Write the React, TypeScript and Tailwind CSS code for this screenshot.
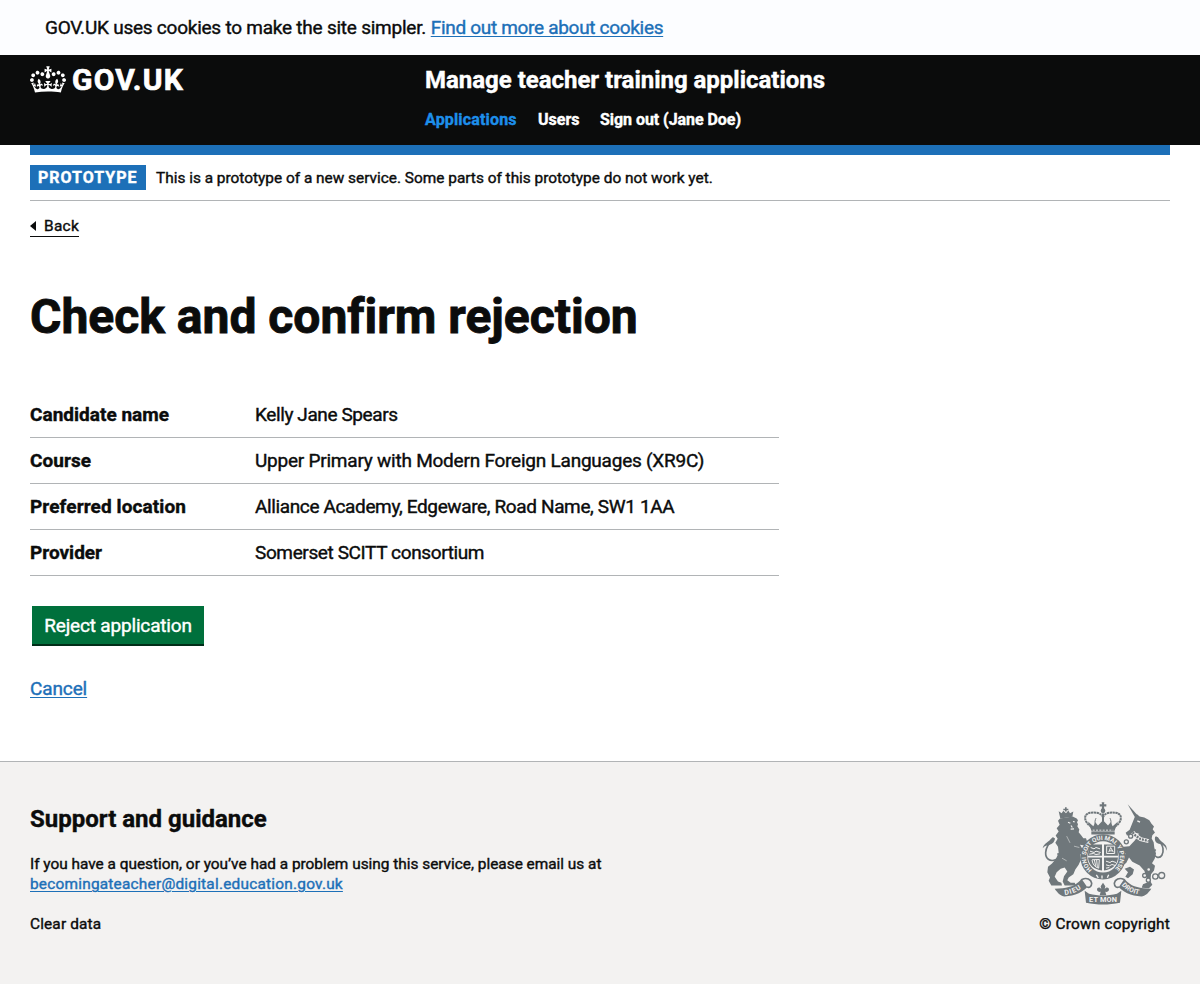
import React from "react";

const CROWN =
  "M25 30.2c3.5 1.5 7.7-.2 9.1-3.7 1.5-3.6-.2-7.8-3.9-9.2-3.6-1.4-7.6.3-9.1 3.9-1.4 3.5.3 7.5 3.9 9zM9 39.5c3.6 1.5 7.8-.2 9.2-3.7 1.5-3.6-.2-7.8-3.9-9.1-3.6-1.5-7.6.2-9.1 3.8-1.4 3.5.3 7.5 3.8 9zM4.4 57.2c3.5 1.5 7.7-.2 9.1-3.8 1.5-3.6-.2-7.7-3.9-9.1-3.5-1.5-7.6.3-9.1 3.8-1.4 3.5.3 7.6 3.9 9.1zm38.3-21.4c3.5 1.5 7.7-.2 9.1-3.8 1.5-3.6-.2-7.7-3.9-9.1-3.6-1.5-7.6.3-9.1 3.8-1.3 3.6.4 7.7 3.9 9.1zm64.4-5.6c-3.6 1.5-7.8-.2-9.1-3.7-1.5-3.6.2-7.8 3.8-9.2 3.6-1.4 7.7.3 9.2 3.9 1.3 3.5-.4 7.5-3.9 9zm15.9 9.3c-3.6 1.5-7.7-.2-9.1-3.7-1.5-3.6.2-7.8 3.7-9.1 3.6-1.5 7.7.2 9.2 3.8 1.5 3.5-.3 7.5-3.8 9zm4.7 17.7c-3.6 1.5-7.8-.2-9.2-3.8-1.5-3.6.2-7.7 3.9-9.1 3.6-1.5 7.7.3 9.2 3.8 1.3 3.5-.4 7.6-3.9 9.1zM89.3 35.8c-3.6 1.5-7.8-.2-9.2-3.8-1.4-3.6.2-7.7 3.9-9.1 3.6-1.5 7.7.3 9.2 3.8 1.4 3.6-.3 7.7-3.9 9.1zM69.7 17.7l8.9 4.7V9.3l-8.9 2.8c-.2-.3-.5-.6-.9-.9L72.4 0H59.6l3.5 11.2c-.3.3-.6.5-.9.9l-8.8-2.8v13.1l8.8-4.7c.3.3.6.7.9.9l-5 15.4v.1c-.2.8-.4 1.6-.4 2.4 0 4.1 3.1 7.5 7 8.1h.2c.3 0 .7.1 1 .1.4 0 .7 0 1-.1h.2c4-.6 7.1-4.1 7.1-8.1 0-.8-.1-1.7-.4-2.4V34l-5.1-15.4c.4-.2.7-.6 1-.9zM66 92.8c16.9 0 32.8 1.1 47.1 3.2 4-16.9 8.9-26.7 14-33.5l-9.6-3.4c1 4.9 1.1 7.2 0 10.2-1.5-1.4-3-4.3-4.2-8.7L108.6 76c2.8-2 5-3.2 7.5-3.3-4.4 9.4-10 11.9-13.6 11.2-4.3-.8-6.3-4.6-5.6-7.9 1-4.7 5.7-5.9 8-.5 4.3-8.7-3-11.4-7.6-8.8 7.1-7.2 7.9-13.5 2.1-21.1-8 6.1-8.1 12.3-4.5 20.8-4.7-5.4-12.1-2.5-9.5 6.2 3.4-5.2 7.9-2 7.2 3.1-.6 4.3-6.4 7.8-13.5 7.2-10.3-.9-10.9-8-11.2-13.8 2.5-.5 7.1 1.8 11 7.3L80.2 60c-4.1 4.4-8 5.3-12.3 5.4 1.4-4.4 8-11.6 8-11.6H55.5s6.4 7.2 7.9 11.6c-4.2-.1-8-1-12.3-5.4l1.4 16.4c3.9-5.5 8.5-7.7 10.9-7.3-.3 5.8-.9 12.8-11.1 13.8-7.2.6-12.9-2.9-13.5-7.2-.7-5 3.8-8.3 7.1-3.1 2.7-8.7-4.6-11.6-9.4-6.2 3.7-8.5 3.6-14.7-4.6-20.8-5.8 7.6-5 13.9 2.2 21.1-4.7-2.6-11.9.1-7.7 8.8 2.3-5.5 7.1-4.2 8.1.5.7 3.3-1.3 7.1-5.7 7.9-3.5.7-9-1.8-13.5-11.2 2.5.1 4.7 1.3 7.5 3.3l-4.7-15.4c-1.2 4.4-2.7 7.2-4.3 8.7-1.1-3-.9-5.3 0-10.2l-9.5 3.4c5 6.9 9.9 16.7 14 33.5 14.8-2.1 30.8-3.2 47.7-3.2z";

function Crest() {
  const ink = "#6f777b";
  const paper = "#f3f2f1";
  return (
    <svg viewBox="36 20 375 308" className="h-[103px] w-[125px]" aria-hidden="true">
      {/* crown over the shield */}
      <g fill={ink}>
        <path d="M215 20h8l-1 6h7v7h-7l1 8h-8l1-8h-7v-7h7z" />
        <circle cx="219" cy="46" r="7" />
        <path d="M174 78l16 14 6-12 8 10 15-16 15 16 8-10 6 12 16-14-11 29h-68z" />
        <path d="M184 108h70v9h-70z" />
      </g>
      <g fill="none" stroke={ink}>
        <path strokeWidth="6" strokeDasharray="7 1.5" d="M184 94c-22-14-26-38-4-42 18-3 36 1 39 14 3-13 21-17 39-14 22 4 18 28-4 42" />
        <path strokeWidth="6" d="M219 54v34" />
        <path strokeWidth="3" d="M198 68c-3 6-4 12-2 20M240 68c3 6 4 12 2 20" />
      </g>
      <path d="M188 104h62" stroke={paper} strokeWidth="2.5" strokeDasharray="6 4" />
      {/* small crown and lion */}
      <g fill={ink}>
        <path d="M105 35h5v5h5v4h-5v4h-5v-4h-5v-4h5zM86 47l9 6 5-7 8 7 7-8 5 8 10-5-3 16-36 5z" />
        <path d="M90 69 128 63 140 69 144 74 141 80 144 86 142 92 148 102 146 110 154 120 160 128 168 128 172 140 164 150 150 148 156 158 172 160 180 170 172 182 160 176 150 176 153 192 146 208 136 222 130 236 116 246 112 254 122 262 134 262 138 270 104 270 98 258 102 242 112 228 104 216 92 220 80 230 74 244 84 258 94 262 96 270 64 270 56 256 60 246 52 230 54 214 66 204 78 190 86 172 84 154 76 142 83 130 77 120 86 108 80 98 89 88 84 76Z" />
        <path d="M38 158c4-14 14-16 23-26l7-7 7 4c-2 13-11 19-22 20-7 1-11 4-15 9z" />
      </g>
      <path d="M72 128c-13 12-24 27-25 43-1 17 12 30 31 21 12-6 14-16 4-17" fill="none" stroke={ink} strokeWidth="5" />
      <path d="M114 80l7 3M129 78l5 1M123 90l4 6M122 101l10-1" stroke={paper} strokeWidth="3.5" />
      <path d="M110 122l10 20M132 152l16 4M96 188l14 8" stroke={paper} strokeWidth="1.5" />
      {/* unicorn */}
      <g fill={ink}>
        <path d="M293 26l33 37-9 6z" />
        <path d="M314 65l7-9 8 7 14 3 15 8 6 10 8 9-4 8 7 10-8 8-2 10 6 11 2 17 5 17-4 16-8 13 9 8-3 14-9 11-2 21 6 11-10 10-22-1 4-11 13-5-3-19-6-16-14-16-22-11-10-13-8 16-11 9-11-3-1-10 12-5 9-19-16-8-9-12-10 3-5-8 9-8 15 4 10 9 17-2 17-18 12-19-10-3-11 7-15 1-4-8 12-9z" />
        <path d="M410 166c-4-16-11-18-24-21-9-3-14-12-10-22l8 2c7 13 18 16 24 26 2 5 3 10 2 15z" />
        <path d="M300 214l12 8-4 14-14 12-8-4 8-14-10-10z" />
      </g>
      <path d="M378 124c6 10 19 19 21 35 2 15-5 30-18 26-11-4-13-15-4-23" fill="none" stroke={ink} strokeWidth="5" />
      <path d="M308 110l8 10 16 11 24 6" fill="none" stroke={paper} strokeWidth="12" />
      <path d="M308 110l8 10 16 11 24 6" fill="none" stroke={ink} strokeWidth="7" strokeDasharray="6 3" />
      <path d="M322 76l8 4" stroke={paper} strokeWidth="4" />
      <g fill={paper} stroke={ink} strokeWidth="4">
        <circle cx="302" cy="122" r="6" />
        <circle cx="289" cy="139" r="6" />
        <circle cx="356" cy="222" r="6" />
        <circle cx="344" cy="240" r="6" />
        <circle cx="355" cy="254" r="6" />
        <circle cx="376" cy="243" r="8" />
        <circle cx="395" cy="240" r="9" />
      </g>
      {/* garter and shield */}
      <circle cx="219" cy="184" r="68" fill={ink} />
      <circle cx="219" cy="184" r="47" fill={paper} />
      <path id="motto" d="M186 223A51 51 0 1 1 252 223" fill="none" />
      <text fill={paper} fontFamily="Roboto" fontWeight="700" fontSize="18" textLength="244" lengthAdjust="spacingAndGlyphs">
        <textPath href="#motto">HONI SOIT QUI MAL Y PENSE</textPath>
      </text>
      <g fill={ink}>
        <path d="M182 147h34v34h-42c0-13 2-24 8-34zM222 147h34c6 10 8 21 8 34h-42zM174 186h42v39c-24-3-40-16-42-39zM222 186h42c-2 23-18 36-42 39z" />
      </g>
      <g fill="none" stroke={paper} strokeWidth="3">
        <path d="M182 156l10 4 6-4 12 4M180 167l12 4 6-4 14 4M178 176l12-2 8 3 12-2" />
        <path d="M228 197l12 4 6-4 12 4M228 208l10 3 8-4 10 3M228 218l10-2" />
        <path d="M230 152h24v22h-24zM242 156l-6 14M242 156l8 14M238 166h10" />
        <path d="M186 194c2 12 8 21 20 24M193 193l4 18M200 193l2 22M186 193l22-1-2 26" />
      </g>
      <path d="M199 238l6 9M216 240v9M236 238l-4 9" stroke={paper} strokeWidth="4" />
      {/* fleur and scrolls */}
      <g fill={ink}>
        <path d="M219 262l7 10-2 9c4-8 13-6 13 1 0 6-6 8-11 7l3 10h-20l3-10c-5 1-11-1-11-7 0-7 9-9 13-1l-2-9z" />
        <path d="M74 280 98 278C124 276 144 266 154 250L178 268C162 290 134 302 104 303 92 302 84 294 74 280Z" />
        <path d="M364 280 340 278C314 276 294 266 284 250L260 268C276 290 304 302 334 303 346 302 354 294 364 280Z" />
        <path d="M164 286l13 9c28 7 56 7 84 0l13-9-4 36c-34 7-68 7-102 0z" />
      </g>
      <path d="M156 252c14-7 27 0 29 11 0 11-8 15-14 11M282 252c-14-7-27 0-29 11 0 11 8 15 14 11" fill={paper} stroke={ink} strokeWidth="5" />
      <g fill={paper} fontFamily="Roboto" fontWeight="700">
        <text x="177" y="320" fontSize="22" textLength="84">ET MON</text>
        <path id="dieu" d="M104 298C128 296 148 287 164 270" fill="none" />
        <path id="droit" d="M275 269C289 286 309 296 340 298" fill="none" />
        <text fontSize="21" textLength="54"><textPath href="#dieu">DIEU</textPath></text>
        <text fontSize="20" textLength="60"><textPath href="#droit">DROIT</textPath></text>
      </g>
    </svg>
  );
}

const rows = [
  { k: "Candidate name", kc: "tracking-[0.016px]", v: "Kelly Jane Spears", vc: "tracking-[-0.4px]" },
  { k: "Course", kc: "tracking-[0.04px]", v: "Upper Primary with Modern Foreign Languages (XR9C)", vc: "tracking-[-0.23px]" },
  { k: "Preferred location", kc: "tracking-[0.1px]", v: "Alliance Academy, Edgeware, Road Name, SW1 1AA", vc: "tracking-[-0.37px]" },
  { k: "Provider", kc: "", v: "Somerset SCITT consortium", vc: "tracking-[-0.38px]" },
];

export default function App() {
  return (
    <div className="flex min-h-[984px] flex-col bg-white font-['Roboto',sans-serif] text-[#0b0c0c] [font-variant-ligatures:none] [-webkit-text-stroke:0.4px_currentColor]">
      <div className="h-[55px] bg-[#fcfdff] px-[45px] pt-[15px] text-[19px] leading-[25px]">
        <span className="tracking-[-0.235px]">GOV.UK uses cookies to make the site simpler.</span>{" "}
        <a className="tracking-[-0.31px] text-[#1d70b8] underline decoration-1 underline-offset-2">Find out more about cookies</a>
      </div>

      <header className="h-[90px] bg-[#0b0c0c] px-[30px] text-white">
        <div className="flex">
          <div className="flex w-[395px] items-start pt-[10px]">
            <svg viewBox="0 0 132 97" className="mt-px h-[27px] w-9 shrink-0 fill-white" aria-hidden="true">
              <path fillRule="evenodd" d={CROWN} />
            </svg>
            <span className="ml-1.5 text-[30px] font-bold leading-[30px] tracking-[1.2px] [-webkit-text-stroke:0.7px_currentColor]">GOV.UK</span>
          </div>
          <div className="pt-[10px]">
            <div className="text-[24px] font-bold leading-[30px] tracking-[-0.02px]">Manage teacher training applications</div>
            <nav className="mt-[15px] flex text-[16px] font-bold leading-5">
              <a className="w-[113px] tracking-[0.16px] text-[#1d8feb]">Applications</a>
              <a className="w-[62px]">Users</a>
              <a className="tracking-[-0.05px]">Sign out (Jane Doe)</a>
            </nav>
          </div>
        </div>
      </header>

      <div className="mx-[30px]">
        <div className="h-[10px] bg-[#1d70b8]" />
        <div className="flex items-center border-b border-[#b1b4b6] py-[10px]">
          <strong className="flex h-[25px] w-[116px] items-center bg-[#1d70b8] pl-2 text-[16px] font-bold leading-5 tracking-[1px] text-white">PROTOTYPE</strong>
          <span className="ml-[10px] text-[15.4px] leading-5">
            This is a prototype of a new service. Some parts of this prototype do not work yet.
          </span>
        </div>

        <a className="mt-[15px] inline-flex h-[21px] w-[49px] items-center border-b border-[#0b0c0c] text-[15.4px] leading-5 tracking-[0.3px]">
          <svg viewBox="0 0 6 10" className="mr-2 h-[10px] w-[6px] shrink-0" aria-hidden="true">
            <path d="M0 5l6-5v10z" fill="#0b0c0c" />
          </svg>
          Back
        </a>

        <main>
          <h1 className="mt-[54px] text-[48px] font-bold leading-[50px] [-webkit-text-stroke:0.9px_currentColor]">Check and confirm rejection</h1>
          <dl className="mt-[50px] w-[749px] text-[19px] leading-[25px]">
            {rows.map((r) => (
              <div key={r.k} className="flex h-[46px] items-center whitespace-nowrap border-b border-[#b1b4b6]">
                <dt className={"w-[225px] font-bold " + r.kc}>{r.k}</dt>
                <dd className={r.vc}>{r.v}</dd>
              </div>
            ))}
          </dl>
          <button className="ml-[2px] mt-[30px] block h-10 w-[172px] border-b-2 border-[#002d18] bg-[#00703c] text-center text-[19px] leading-[19px] tracking-[-0.17px] text-white">
            Reject application
          </button>
          <a className="mt-[30px] block text-[19px] leading-[25px] tracking-[-0.12px] text-[#1d70b8] underline decoration-1 underline-offset-2">
            Cancel
          </a>
        </main>
      </div>

      <footer className="mt-[60px] flex flex-1 justify-between border-t border-[#b1b4b6] bg-[#f3f2f1] px-[30px] pt-10">
        <div className="pt-[2px] text-[15.4px] leading-5">
          <h2 className="text-[24px] font-bold leading-[30px]">Support and guidance</h2>
          <p className="mt-5">
            <span className="tracking-[-0.01px]">If you have a question, or you’ve had a problem using this service, please email us at</span>
            <br />
            <a className="tracking-[0.22px] text-[#1d70b8] underline decoration-1 underline-offset-2">becomingateacher@digital.education.gov.uk</a>
          </p>
          <p className="mt-5 tracking-[0.15px]">Clear data</p>
        </div>
        <div className="flex flex-col items-end">
          <div className="mr-[3px]">
            <Crest />
          </div>
          <span className="mt-[9px] text-[15.4px] leading-5 tracking-[0.2px]">© Crown copyright</span>
        </div>
      </footer>
    </div>
  );
}
